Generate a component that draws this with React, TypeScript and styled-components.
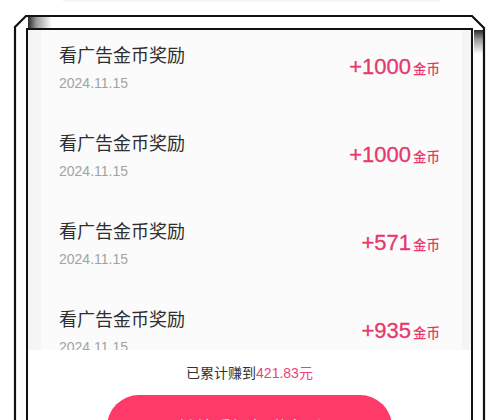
import React from "react";
import styled, { createGlobalStyle } from "styled-components";

const GlobalStyle = createGlobalStyle`
  html, body { margin: 0; padding: 0; background: #ffffff; }
  body { font-family: "Liberation Sans", "Noto Sans CJK SC", sans-serif; }
`;

const Page = styled.div`
  position: relative;
  width: 500px;
  height: 420px;
  overflow: hidden;
  background: #ffffff;
`;

const Bezel = styled.svg`
  position: absolute;
  left: 0;
  top: 0;
  pointer-events: none;
`;

const Screen = styled.div`
  position: relative;
  box-sizing: border-box;
  margin: 28px 0 0 26px;
  width: 447px;
  height: 392px;
  border: 2px solid #111111;
  border-bottom: none;
  background: #ffffff;
  display: flex;
  flex-direction: column;
  overflow: hidden;
`;

const ListViewport = styled.div`
  height: 320px;
  flex-shrink: 0;
  overflow: hidden;
  background: #f5f5f5;
  padding: 0 9px 0 13px;
`;

const Card = styled.div`
  margin-top: -7px;
  background: #fbfbfb;
  padding: 0 22px 0 18px;
`;

const Item = styled.div`
  height: 88px;
  display: flex;
  align-items: center;
  justify-content: space-between;
`;

const Info = styled.div`
  display: flex;
  flex-direction: column;
  gap: 8px;
`;

const Title = styled.div`
  font-family: "Noto Sans CJK SC", sans-serif;
  font-size: 18px;
  line-height: 24px;
  color: #2e2e2e;
`;

const DateText = styled.div`
  font-family: "Liberation Sans", sans-serif;
  font-size: 14px;
  line-height: 18px;
  color: #a3a3a3;
`;

const Amount = styled.div`
  display: flex;
  align-items: baseline;
  color: #e8376c;
`;

const AmountNumber = styled.span`
  font-family: "Liberation Sans", sans-serif;
  font-size: 22px;
  line-height: 26px;
  -webkit-text-stroke: 0.3px #e8376c;
`;

const AmountUnit = styled.span`
  font-family: "Noto Sans CJK SC", sans-serif;
  font-size: 13.5px;
  font-weight: 500;
  margin-left: 2px;
`;

const Footer = styled.div`
  flex: 1;
  display: flex;
  flex-direction: column;
  align-items: center;
  padding-top: 13px;
  gap: 12px;
  background: #ffffff;
`;

const Summary = styled.div`
  font-family: "Liberation Sans", "Noto Sans CJK SC", sans-serif;
  font-size: 14px;
  line-height: 20px;
  color: #333333;
`;

const Highlight = styled.span`
  color: #e8457a;
`;

const ActionButton = styled.button`
  flex-shrink: 0;
  width: 285px;
  height: 64px;
  border: none;
  border-radius: 32px;
  background: #fe3a69;
  color: #ffffff;
  font-family: "Noto Sans CJK SC", sans-serif;
  font-size: 18px;
  padding: 0;
`;

const records = [
  { title: "看广告金币奖励", date: "2024.11.15", amount: 1000 },
  { title: "看广告金币奖励", date: "2024.11.15", amount: 1000 },
  { title: "看广告金币奖励", date: "2024.11.15", amount: 571 },
  { title: "看广告金币奖励", date: "2024.11.15", amount: 935 },
];

function BezelDrawing() {
  return (
    <Bezel width="500" height="420" viewBox="0 0 500 420">
      <defs>
        <linearGradient id="topShade" x1="0" y1="0" x2="1" y2="0">
          <stop offset="0" stopColor="#2a2a2a" />
          <stop offset="0.35" stopColor="#9a9a9a" />
          <stop offset="1" stopColor="#ffffff" />
        </linearGradient>
        <linearGradient id="rightShade" x1="0" y1="0" x2="0" y2="1">
          <stop offset="0" stopColor="#2a2a2a" />
          <stop offset="0.4" stopColor="#9a9a9a" />
          <stop offset="1" stopColor="#ffffff" />
        </linearGradient>
      </defs>
      <rect x="63" y="0" width="377" height="2" fill="#f6f6f6" />
      <rect x="28" y="17" width="24" height="11" fill="url(#topShade)" />
      <rect x="474" y="30" width="9" height="24" fill="url(#rightShade)" />
      <path
        d="M15 420 V27 L26 16 H472 L484 28 V420"
        fill="none"
        stroke="#111111"
        strokeWidth="2.2"
        strokeLinejoin="miter"
      />
    </Bezel>
  );
}

export default function App() {
  return (
    <>
      <GlobalStyle />
      <Page>
        <BezelDrawing />
        <Screen>
          <ListViewport>
            <Card>
              {records.map((r, i) => (
                <Item key={i}>
                  <Info>
                    <Title>{r.title}</Title>
                    <DateText>{r.date}</DateText>
                  </Info>
                  <Amount>
                    <AmountNumber>+{r.amount}</AmountNumber>
                    <AmountUnit>金币</AmountUnit>
                  </Amount>
                </Item>
              ))}
            </Card>
          </ListViewport>
          <Footer>
            <Summary>
              已累计赚到<Highlight>421.83元</Highlight>
            </Summary>
            <ActionButton>继续看视频赚金币</ActionButton>
          </Footer>
        </Screen>
      </Page>
    </>
  );
}
